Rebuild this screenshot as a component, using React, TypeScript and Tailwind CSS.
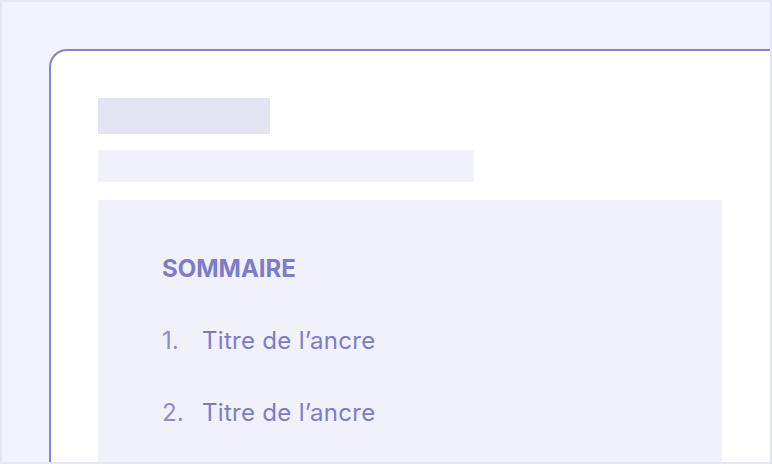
import React from 'react';

const font = { fontFamily: 'Inter, "Noto Sans", sans-serif' };

const anchors = ["Titre de l’ancre", "Titre de l’ancre"];

const App: React.FC = () => {
  return (
    <div className="w-[772px] h-[464px] overflow-hidden border-2 border-[#e5e5f4] bg-[#f2f2fb]" style={font}>
      <div className="ml-[47px] mt-[47px] h-[416px] border-l-2 border-t-2 border-[#8383d1] rounded-tl-[18px] bg-white pl-[47px] pt-[47px]">
        <div className="w-[172px] h-[36px] bg-[#e4e4f4]" />
        <div className="mt-[16px] w-[376px] h-[32px] bg-[#f1f1fa]" />
        <div className="mt-[18px] w-[624px] h-[300px] bg-[#f1f1fa] pl-[64px] pt-[53px]">
          <div className="text-[24px] leading-[32px] font-bold text-[#7c7cc9]">SOMMAIRE</div>
          <ol className="mt-[40px] flex flex-col gap-[40px]">
            {anchors.map((label, i) => (
              <li key={i} className="flex text-[24px] leading-[32px] text-[#7c7cc9]">
                <span className="w-[40px] text-[#8b8bd3]">{i + 1}.</span>
                <span className="tracking-[0.3px]">{label}</span>
              </li>
            ))}
          </ol>
        </div>
      </div>
    </div>
  );
};

export default App;
